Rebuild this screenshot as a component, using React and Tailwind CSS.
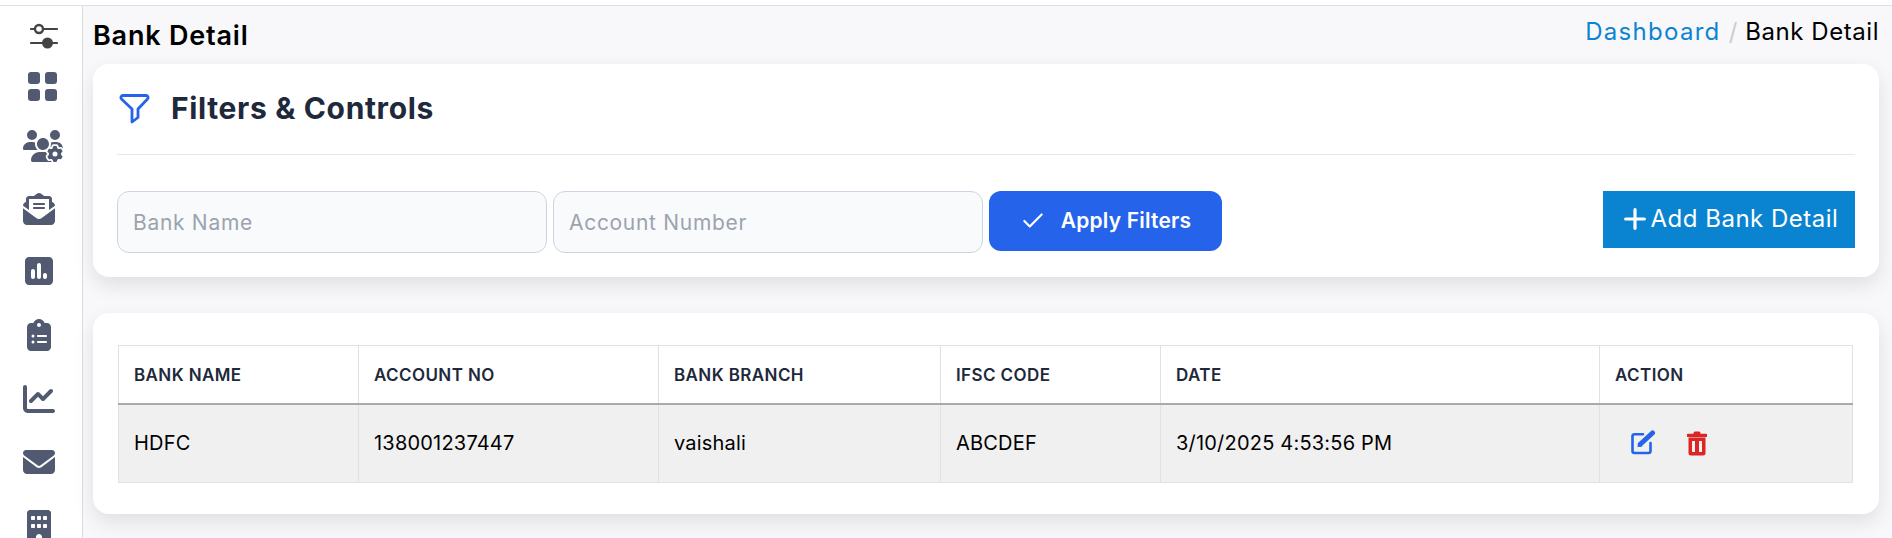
import { Check, Plus } from "lucide-react";
import {
  FaBuilding,
  FaChartLine,
  FaClipboardList,
  FaEnvelope,
  FaEnvelopeOpenText,
  FaSquarePollVertical,
  FaUsersGear,
} from "react-icons/fa6";

const font = { fontFamily: "Inter, 'Noto Sans', sans-serif" };

function SlidersIcon() {
  return (
    <svg width="28" height="26" viewBox="0 0 28 26" fill="none" className="ml-[7px]">
      <path d="M1 6h4M13 6h14M1 20h26" stroke="#444" strokeWidth="2.2" strokeLinecap="round" />
      <circle cx="9" cy="6" r="4" stroke="#444" strokeWidth="2.4" />
      <circle cx="17.5" cy="20" r="5.5" fill="#444" />
    </svg>
  );
}

function GridIcon() {
  return (
    <svg width="30" height="30" viewBox="0 0 30 30" fill="#525a71" className="ml-[5px]">
      <rect x="0" y="1" width="12" height="12" rx="3" />
      <rect x="17" y="1" width="12" height="12" rx="3" />
      <rect x="0" y="18" width="12" height="12" rx="3" />
      <rect x="17" y="18" width="12" height="12" rx="3" />
    </svg>
  );
}

function FunnelIcon() {
  return (
    <svg width="32" height="32" viewBox="0 0 32 32" fill="none" stroke="#2563eb" strokeWidth="2.8" strokeLinejoin="round" className="ml-[2px]">
      <path d="M4 2.5H27a2 2 0 0 1 1.5 3.4L19 16V24.5L13 29V16L2.5 5.9A2 2 0 0 1 4 2.5Z" />
    </svg>
  );
}

function EditIcon() {
  return (
    <svg width="26" height="26" viewBox="0 0 26 26" fill="none">
      <path d="M12 4.3H3.500a2 2 0 0 0-2 2V21a2 2 0 0 0 2 2H17.500a2 2 0 0 0 2-2V13" stroke="#2563eb" strokeWidth="2.6" strokeLinecap="round" />
      <path d="M9.500 14L21.500 3" stroke="#2563eb" strokeWidth="5" strokeLinecap="round" />
      <path d="M6.500 17L7 12.500L11.500 16.500Z" fill="#2563eb" />
    </svg>
  );
}

function TrashIcon() {
  return (
    <svg width="20" height="25" viewBox="0 0 20 25" fill="#dc2626">
      <path d="M6.500 2a1.500 1.500 0 0 1 1.500-1.500h4A1.500 1.500 0 0 1 13.500 2v.8H19a1.500 1.500 0 0 1 0 3.200H1a1.500 1.500 0 0 1 0-3.200h5.500z" />
      <path fillRule="evenodd" d="M1.500 6.500h17V22a2.500 2.500 0 0 1-2.500 2.500H4A2.500 2.500 0 0 1 1.500 22zM5 10v11h3V10zM12 10v11h3V10z" />
    </svg>
  );
}

const sideItems = [
  { h: "h-[44px]", icon: <SlidersIcon /> },
  { h: "h-[56px]", icon: <GridIcon /> },
  { h: "h-[64px]", icon: <FaUsersGear size={40} /> },
  { h: "h-[62px]", icon: <FaEnvelopeOpenText size={32} /> },
  { h: "h-[62px]", icon: <FaSquarePollVertical size={32} /> },
  { h: "h-[66px]", icon: <FaClipboardList size={32} /> },
  { h: "h-[62px]", icon: <FaChartLine size={32} /> },
  { h: "h-[64px]", icon: <FaEnvelope size={32} /> },
  { h: "h-[64px]", icon: <FaBuilding size={32} /> },
];

const columns = [
  { label: "BANK NAME", width: "w-[240px]", value: "HDFC" },
  { label: "ACCOUNT NO", width: "w-[300px]", value: "138001237447" },
  { label: "BANK BRANCH", width: "w-[282px]", value: "vaishali" },
  { label: "IFSC CODE", width: "w-[220px]", value: "ABCDEF" },
  { label: "DATE", width: "w-[439px]", value: "3/10/2025 4:53:56 PM" },
];

export default function App() {
  return (
    <div className="flex h-screen flex-col overflow-hidden bg-[#f8f8fb]" style={font}>
      <div className="h-[6px] shrink-0 border-b border-[#dedfe3] bg-white" />
      <div className="flex min-h-0 flex-1">
        <aside className="flex w-[83px] shrink-0 flex-col border-r border-[#dcdcdc] bg-white pt-[8px] pl-[23px] text-[#525a71]">
          {sideItems.map((item, i) => (
            <div key={i} className={`flex shrink-0 items-center ${item.h}`}>
              {item.icon}
            </div>
          ))}
        </aside>

        <main className="min-w-0 flex-1 pl-[10px] pr-[13px]">
          <div className="flex h-[58px] items-start justify-between">
            <h1 className="mt-[15px] text-[27px] leading-[30px] font-semibold tracking-[0.8px] text-black">Bank Detail</h1>
            <div className="mt-[11px] flex items-center text-[24px] leading-[30px]">
              <a className="tracking-[1.3px] text-[#0b84d4]">Dashboard</a>
              <span className="mx-[8px] text-[#cccccc]">/</span>
              <span className="tracking-[0.55px] text-black">Bank Detail</span>
            </div>
          </div>

          <section className="h-[213px] rounded-2xl bg-white px-[24px] shadow-[0_8px_20px_rgba(0,0,0,0.1)]">
            <div className="flex h-[91px] items-center border-b border-[#e2e8f0]">
              <FunnelIcon />
              <h2 className="mb-[1px] ml-[20px] text-[30px] font-bold tracking-[0.65px] text-[#1e293b]">Filters &amp; Controls</h2>
            </div>
            <div className="mt-[36px] flex items-start">
              <input
                placeholder="Bank Name"
                className="h-[62px] w-[430px] rounded-xl border border-[#cbd5e1] bg-[#f8fafc] px-[15px] text-[21px] tracking-[0.7px] placeholder:text-[#9ca3af]"
              />
              <input
                placeholder="Account Number"
                className="ml-[6px] h-[62px] w-[430px] rounded-xl border border-[#cbd5e1] bg-[#f8fafc] px-[15px] text-[21px] tracking-[0.7px] placeholder:text-[#9ca3af]"
              />
              <button className="ml-[6px] flex h-[60px] w-[233px] items-center justify-center gap-[15px] rounded-xl bg-[#2563eb] text-[21px] font-semibold tracking-[0.2px] text-white">
                <Check size={26} strokeWidth={2} />
                Apply Filters
              </button>
              <button className="ml-auto flex h-[57px] w-[252px] items-center justify-center bg-[#0a83d1] pr-[1px] pb-[2px] text-[24px] tracking-[0.5px] text-white">
                <Plus size={32} strokeWidth={2.4} />
                Add Bank Detail
              </button>
            </div>
          </section>

          <section className="mt-[36px] h-[201px] rounded-2xl bg-white pt-[32px] pr-[26px] pl-[25px] shadow-[0_8px_20px_rgba(0,0,0,0.1)]">
            <table className="w-full table-fixed border-collapse">
              <thead>
                <tr className="h-[58px] border-b-2 border-[#a9a9a9]">
                  {columns.map((c) => (
                    <th key={c.label} className={`border border-b-0 border-[#dee2e6] px-[15px] pt-[2px] text-left text-[17px] font-semibold tracking-[0.4px] text-[#1e293b] ${c.width}`}>
                      {c.label}
                    </th>
                  ))}
                  <th className="border border-b-0 border-[#dee2e6] px-[15px] pt-[2px] text-left text-[17px] font-semibold tracking-[0.4px] text-[#1e293b]">ACTION</th>
                </tr>
              </thead>
              <tbody>
                <tr className="h-[79px] bg-[#f0f0f1]">
                  {columns.map((c) => (
                    <td key={c.label} className="border border-[#dee2e6] px-[15px] text-[20px] tracking-[0.2px] text-black">
                      {c.value}
                    </td>
                  ))}
                  <td className="border border-[#dee2e6] pl-[31px]">
                    <div className="flex items-center gap-[30px]">
                      <EditIcon />
                      <TrashIcon />
                    </div>
                  </td>
                </tr>
              </tbody>
            </table>
          </section>
        </main>
      </div>
    </div>
  );
}
